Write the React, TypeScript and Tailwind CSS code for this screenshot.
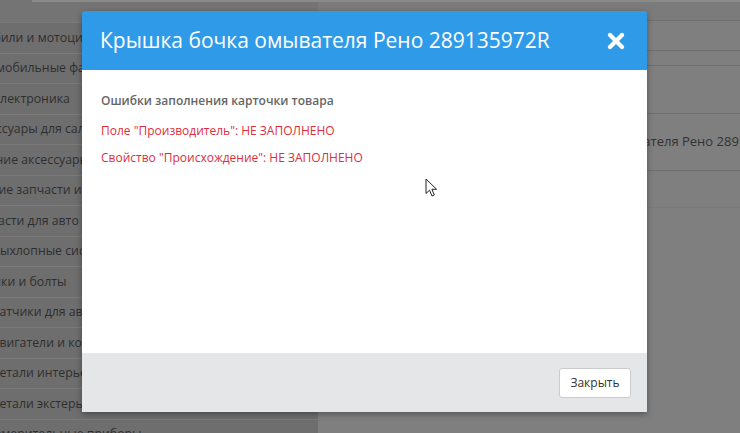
import { X } from "lucide-react";

const categories = [
  { text: "Автомобили и мотоциклы", shift: 51 },
  { text: "Автомобильные фары", shift: 32 },
  { text: "Автоэлектроника", shift: 34 },
  { text: "Аксессуары для салона", shift: 31 },
  { text: "Внешние аксессуары", shift: 38 },
  { text: "Другие запчасти и аксессуары", shift: 29 },
  { text: "Запчасти для авто", shift: 31 },
  { text: "Выхлопные системы", shift: 8 },
  { text: "Гайки и болты", shift: 20 },
  { text: "Датчики для авто", shift: 9 },
  { text: "Двигатели и компоненты", shift: 9 },
  { text: "Детали интерьера", shift: 9 },
  { text: "Детали экстерьера", shift: 9 },
  { text: "Измерительные приборы", shift: 14 },
];

const errors = [
  'Поле "Производитель": НЕ ЗАПОЛНЕНО',
  'Свойство "Происхождение": НЕ ЗАПОЛНЕНО',
];

const font = { fontFamily: '"Open Sans", "Noto Sans", sans-serif' };

export default function App() {
  return (
    <div
      className="relative w-[740px] h-[433px] overflow-hidden bg-[#7f7f7f]"
      style={font}
    >
      {/* dimmed page behind the modal */}
      <div className="flex h-full">
        <div className="w-[318px] shrink-0 bg-[#6e6e6e]">
          <div className="h-[22px] bg-[#747474] pl-[32px]">
            <div className="h-[2px] bg-[#8a8a8a]" />
          </div>
          {categories.map((c, i) => (
            <div
              key={i}
              className="h-[30.5px] border-t border-[#7b7b7b] overflow-hidden flex items-center"
            >
              <span
                className="whitespace-nowrap text-[12.3px] text-[#2e2e2e]"
                style={{ marginLeft: -c.shift }}
              >
                {c.text}
              </span>
            </div>
          ))}
        </div>
        <div className="flex-1">
          <div className="h-[2px] bg-[#8a8a8a]" />
          <div className="h-[18px] bg-[#7b7b7b]" />
          <div className="h-[30px] border-t border-[#6f6f6f]" />
          <div className="h-[15px] border-t border-[#6f6f6f]" />
          <div className="h-[48px] border-t border-[#6f6f6f]" />
          <div className="h-[57px] border-t border-[#6f6f6f] flex items-center pl-[195px]">
            <span className="whitespace-nowrap text-[13px] text-[#333]">
              Крышка бочка омывателя Рено 289135972R
            </span>
          </div>
          <div className="h-[37px] border-t border-[#6f6f6f]" />
          <div className="border-t border-[#7a7a7a]" />
        </div>
      </div>

      {/* modal */}
      <div className="absolute inset-0">
        <div className="ml-[82px] mt-[11px] w-[565px] rounded-t-[3px] shadow-[0_2px_6px_rgba(0,0,0,0.35)] overflow-hidden">
          <div className="h-[59px] bg-[#2f9be8] flex items-center justify-between pl-[18px] pr-[19px]">
            <h2 className="text-[21px] text-white font-normal leading-none">
              Крышка бочка омывателя Рено 289135972R
            </h2>
            <X className="w-[24px] h-[24px] text-white" strokeWidth={4.2} />
          </div>
          <div className="h-[283px] bg-white px-[19px] pt-[22px]">
            <div className="text-[12px] font-semibold text-[#666]">
              Ошибки заполнения карточки товара
            </div>
            <div className="mt-[12px] flex flex-col gap-[10px]">
              {errors.map((e, i) => (
                <div key={i} className="text-[12px] leading-[17px] text-[#dc2f3d]">
                  {e}
                </div>
              ))}
            </div>
          </div>
          <div className="h-[59px] bg-[#e4e6e7] flex items-center justify-end pr-[16px]">
            <button className="w-[72px] h-[30px] bg-white border border-[#ccc] rounded-[3px] text-[12px] text-[#333]">
              Закрыть
            </button>
          </div>
        </div>
      </div>

      {/* mouse cursor */}
      <svg
        className="absolute left-[425px] top-[178px]"
        width="13"
        height="20"
        viewBox="0 0 13 20"
      >
        <path
          d="M1 1 L1 15.5 L4.5 12.2 L7 18 L9.3 17 L6.9 11.3 L11.6 11.3 Z"
          fill="white"
          stroke="#222"
          strokeWidth="1"
          strokeLinejoin="round"
        />
      </svg>
    </div>
  );
}
